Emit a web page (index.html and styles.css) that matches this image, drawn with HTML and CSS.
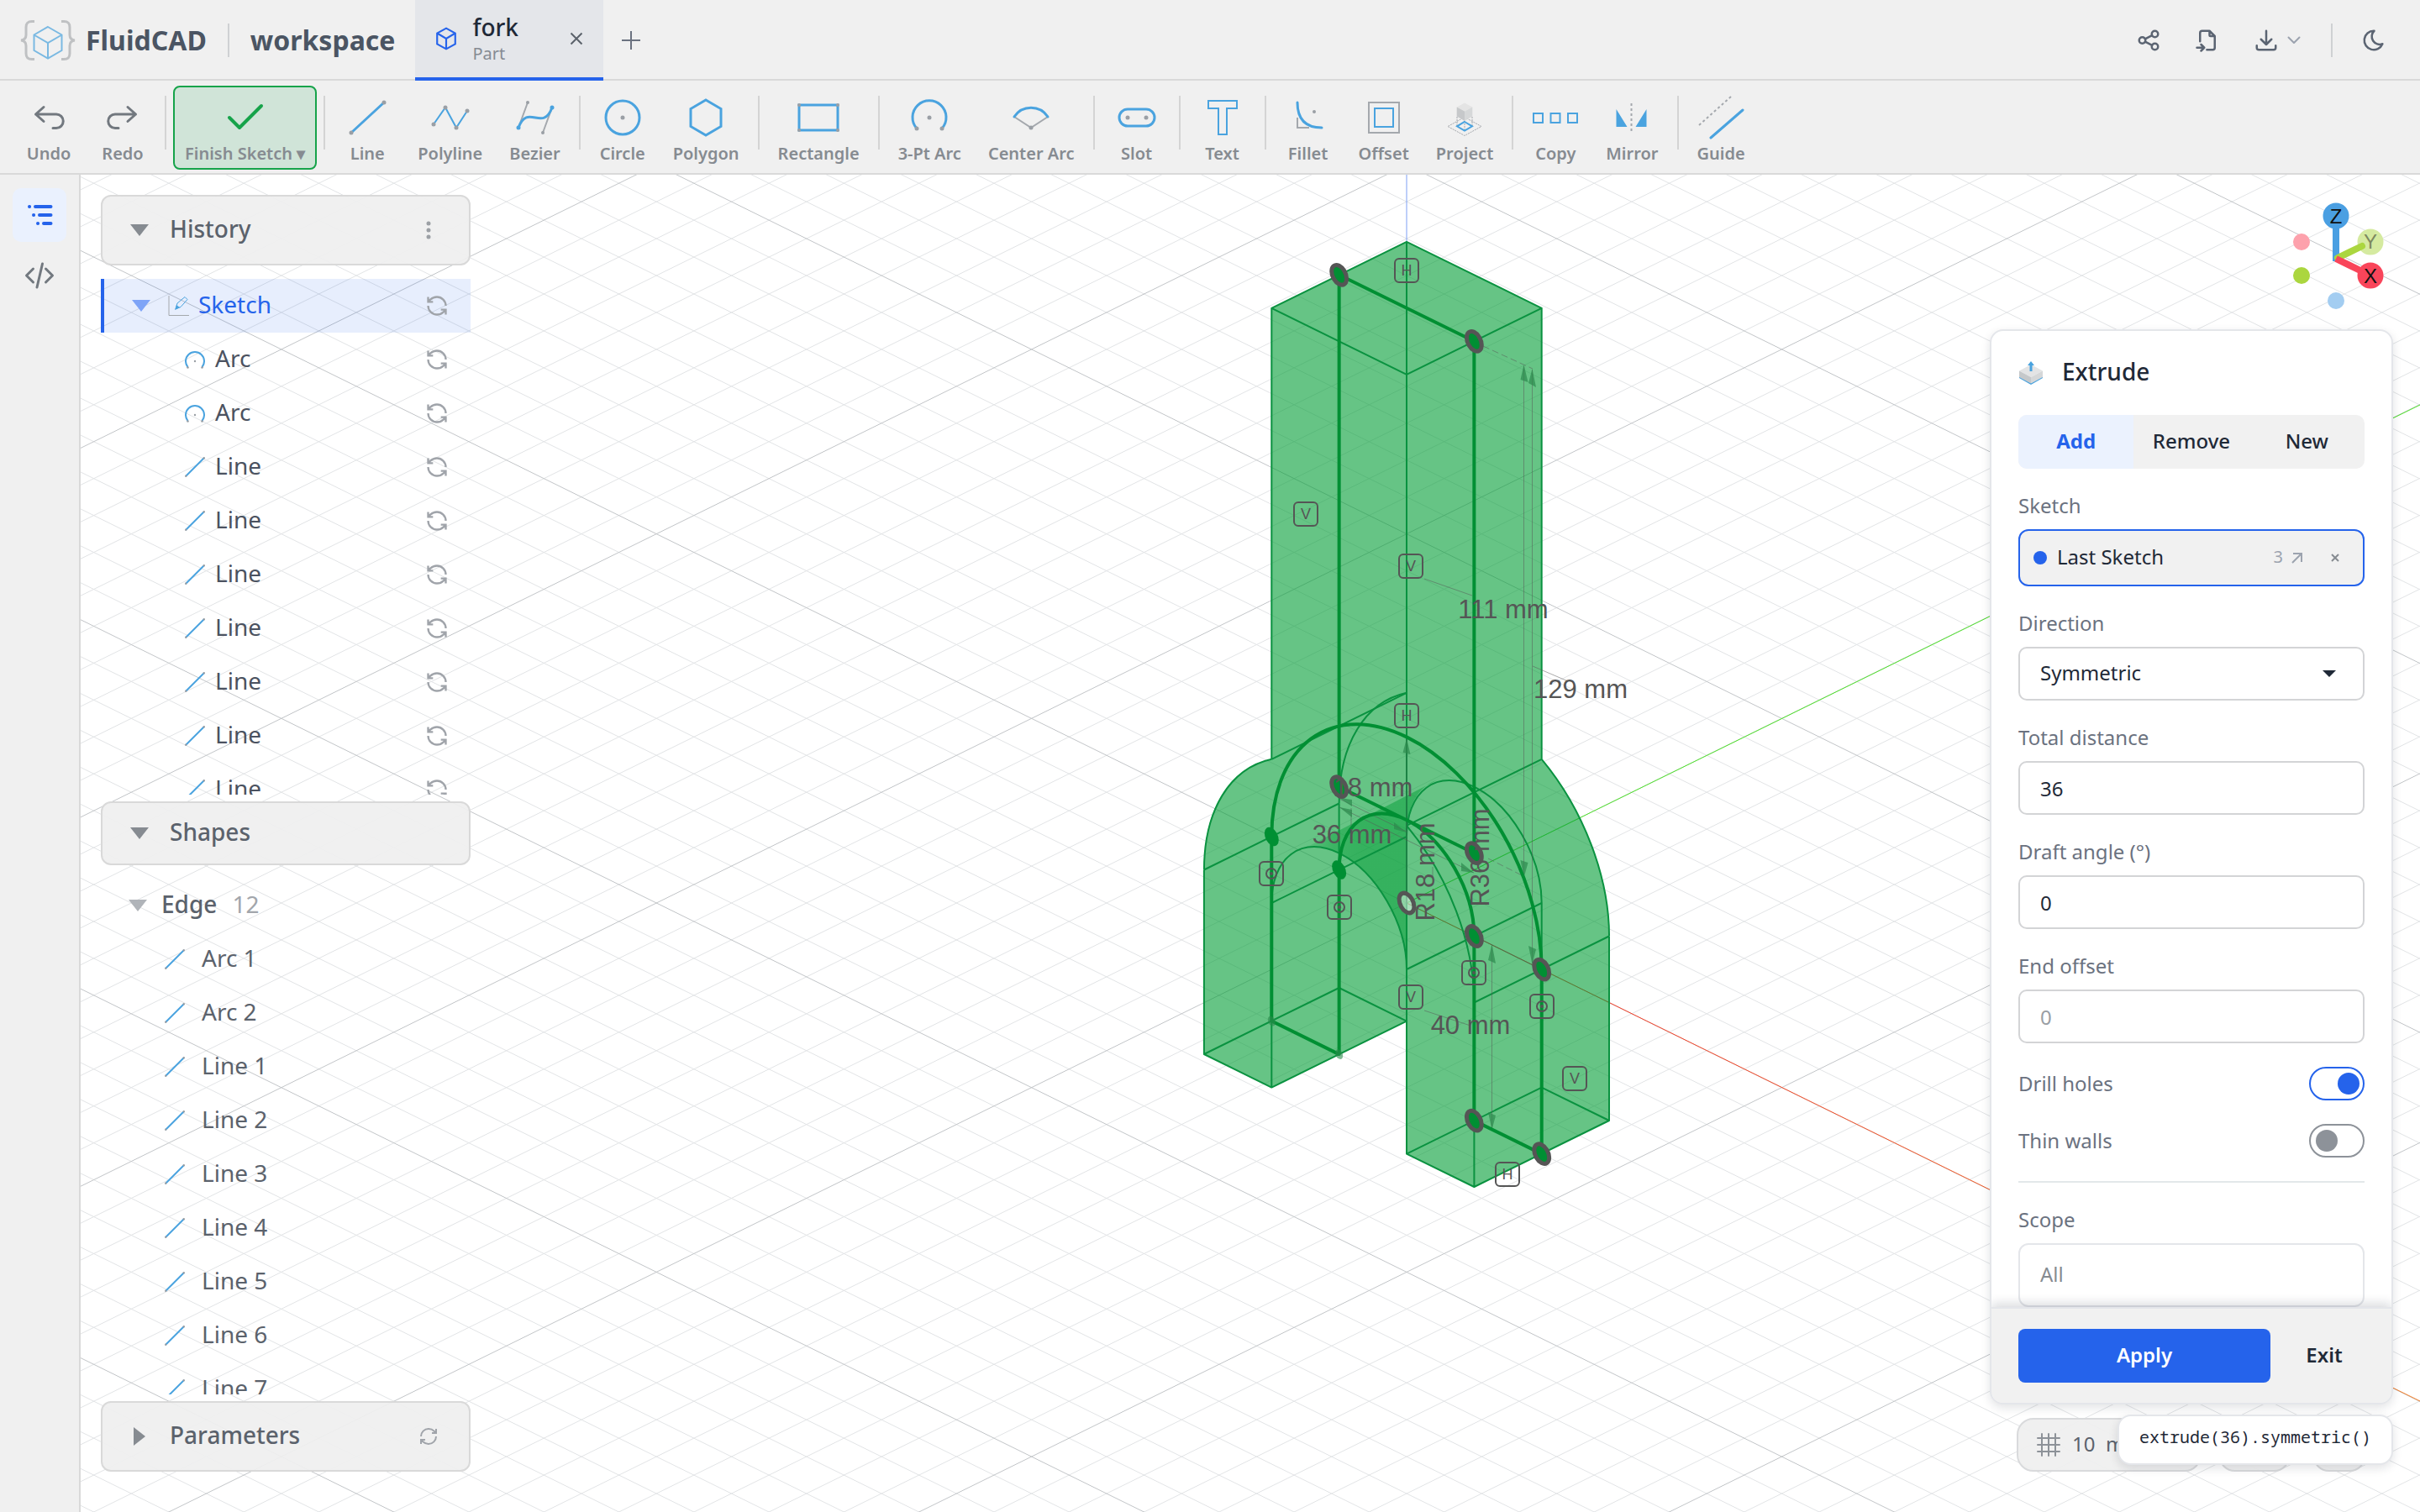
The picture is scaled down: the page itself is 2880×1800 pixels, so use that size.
FILE: index.html
```html
<!DOCTYPE html>
<html lang="en">
<head>
<meta charset="utf-8">
<title>FluidCAD - fork</title>
<link rel="stylesheet" href="styles.css">
</head>
<body>
<svg class="defs" aria-hidden="true">
  <symbol id="i-refresh" viewBox="0 0 24 24"><path d="M21 12a9 9 0 0 0-9-9 9.75 9.75 0 0 0-6.74 2.74L3 8M3 3v5h5M3 12a9 9 0 0 0 9 9 9.75 9.75 0 0 0 6.74-2.74L21 16M16 16h5v5"/></symbol>
  <symbol id="i-sync" viewBox="0 0 24 24"><path d="M3 12a9 9 0 0 1 9-9 9.75 9.75 0 0 1 6.74 2.74L21 8M21 3v5h-5M21 12a9 9 0 0 1-9 9 9.75 9.75 0 0 1-6.74-2.74L3 16M8 16H3v5"/></symbol>
  <symbol id="i-line" viewBox="0 0 24 24"><path class="b" d="M1 23 23 1"/><circle class="d" cx="1.2" cy="22.8" r="1.2"/><circle class="d" cx="22.8" cy="1.2" r="1.2"/></symbol>
  <symbol id="i-arc" viewBox="0 0 24 24"><path class="b" d="M3.500 21A11 11 0 1 1 20.500 21"/><circle class="d" cx="3.500" cy="21.500" r="1.300"/><circle class="d" cx="20.500" cy="21.500" r="1.300"/><circle class="d" cx="12" cy="14" r="1.200"/></symbol>
  <symbol id="i-cube" viewBox="0 0 24 26"><path d="M12 1.500 22 7v12l-10 5.500L2 19V7zM2 7l10 6 10-6M12 13v11.500"/></symbol>
  <symbol id="i-tri" viewBox="0 0 22 14"><path d="M0 0h22L11 14z"/></symbol>
</svg>

<header class="topbar">
  <svg class="logo" viewBox="0 0 66 48"><path class="brace" d="M17 1.500h-3c-5 0-7 2-7 7v9c0 4-1.500 6-6 6.500 4.500.5 6 2.500 6 6.500v9c0 5 2 7 7 7h3M49 1.500h3c5 0 7 2 7 7v9c0 4 1.500 6 6 6.500-4.500.5-6 2.500-6 6.500v9c0 5-2 7-7 7h-3"/><path class="box" d="M33 8 49.500 17.500V36L33 45.500 16.500 36V17.500zM16.500 17.500 33 27l16.500-9.500M33 27v18.500"/></svg>
  <span class="brand">FluidCAD</span>
  <span class="bar"></span>
  <span class="workspace">workspace</span>
  <div class="tab">
    <svg class="tab-icon" viewBox="0 0 24 26"><use href="#i-cube"/></svg>
    <div class="tab-text"><span class="tab-name">fork</span><span class="tab-kind">Part</span></div>
    <button class="plain tab-close" aria-label="Close tab"><svg width="16" height="16" viewBox="0 0 16 16"><path d="M1.500 1.500l13 13M14.500 1.500l-13 13"/></svg></button>
  </div>
  <button class="plain add-tab" aria-label="New tab"><svg width="22" height="22" viewBox="0 0 22 22"><path d="M11 0v22M0 11h22"/></svg></button>
  <nav class="actions">
    <button class="plain" aria-label="Share"><svg width="30" height="30" viewBox="0 0 24 24"><circle cx="6" cy="12" r="3"/><circle cx="18" cy="6" r="3"/><circle cx="18" cy="18" r="3"/><path d="M8.700 10.700l6.600-3.400M8.700 13.300l6.600 3.400"/></svg></button>
    <button class="plain" aria-label="Import"><svg width="30" height="30" viewBox="0 0 24 24"><path d="M14 3v4a1 1 0 0 0 1 1h4M5 13V5a2 2 0 0 1 2-2h7l5 5v11a2 2 0 0 1-2 2h-5.500M2 19h7M6 16l3 3-3 3"/></svg></button>
    <button class="plain" aria-label="Export"><svg width="30" height="30" viewBox="0 0 24 24"><path d="M3 17v2a2 2 0 0 0 2 2h14a2 2 0 0 0 2-2v-2M7 11l5 5 5-5M12 3v13"/></svg><svg class="chev" width="16" height="10" viewBox="0 0 16 10"><path d="M1.500 1.500 8 8l6.500-6.500"/></svg></button>
    <span class="bar"></span>
    <button class="plain" aria-label="Dark mode"><svg width="30" height="30" viewBox="0 0 24 24"><path d="M12 3h.4a7.500 7.500 0 0 0 7.900 12.400A9 9 0 1 1 12 3z"/></svg></button>
  </nav>
</header>

<div class="toolbar" role="toolbar">
  <button class="tool"><svg class="nav" viewBox="0 0 56 56"><path d="M22 15.500 12.500 24l9.500 8.500M12.500 24H37a8.200 8.200 0 0 1 0 16.500h-4"/></svg>Undo</button>
  <button class="tool"><svg class="nav" viewBox="0 0 56 56"><path d="M34 15.500l9.500 8.500-9.500 8.500M43.500 24H19a8.200 8.200 0 0 0 0 16.500h4"/></svg>Redo</button>
  <span class="rule"></span>
  <button class="tool finish"><svg viewBox="0 0 56 56"><path d="M9 28l12 12L47 14"/></svg><span>Finish Sketch ▾</span></button>
  <span class="rule"></span>
  <button class="tool"><svg viewBox="0 0 56 56"><path class="t" d="M9 46 48 10"/><circle class="d" cx="9" cy="46" r="2.500"/><circle class="d" cx="48" cy="10" r="2.500"/></svg>Line</button>
  <button class="tool"><svg viewBox="0 0 56 56"><path class="b" d="M8 36 22 16l13 24 13-20"/><g class="d"><circle cx="8" cy="36" r="2.500"/><circle cx="22" cy="16" r="2.500"/><circle cx="35" cy="40" r="2.500"/><circle cx="48" cy="20" r="2.500"/></g></svg>Polyline</button>
  <button class="tool"><svg viewBox="0 0 56 56"><path class="g" d="M8 40 19 10M48 16 37 46"/><path class="t" d="M8 40C19 10 37 46 48 16"/><circle class="d" cx="19" cy="10" r="2"/><circle class="d" cx="37" cy="46" r="2"/><circle class="f" cx="8" cy="40" r="2.500"/><circle class="f" cx="48" cy="16" r="2.500"/></svg>Bezier</button>
  <span class="rule"></span>
  <button class="tool"><svg viewBox="0 0 56 56"><circle class="t" cx="28" cy="28" r="20"/><circle class="d" cx="28" cy="28" r="2.500"/></svg>Circle</button>
  <button class="tool"><svg viewBox="0 0 56 56"><path class="t" d="M28 7 46 17.500v21L28 49 10 38.500v-21z"/></svg>Polygon</button>
  <span class="rule"></span>
  <button class="tool"><svg viewBox="0 0 56 56"><rect class="t" x="5" y="13" width="46" height="30"/><g class="d"><circle cx="5" cy="13" r="2"/><circle cx="51" cy="13" r="2"/><circle cx="5" cy="43" r="2"/><circle cx="51" cy="43" r="2"/></g></svg>Rectangle</button>
  <span class="rule"></span>
  <button class="tool"><svg viewBox="0 0 56 56"><path class="t" d="M13 41A20 20 0 1 1 43 41"/><circle class="d" cx="28" cy="28" r="2.500"/><circle class="d" cx="13" cy="41" r="2.500"/><circle class="d" cx="43" cy="41" r="2.500"/></svg>3-Pt Arc</button>
  <button class="tool"><svg viewBox="0 0 56 56"><path class="g" d="M8 27 28 40 48 27"/><path class="t" d="M8 27A24 24 0 0 1 48 27"/><circle class="d" cx="28" cy="40" r="2.500"/></svg>Center Arc</button>
  <span class="rule"></span>
  <button class="tool"><svg viewBox="0 0 56 56"><rect class="t" x="7" y="18" width="42" height="20" rx="10"/><circle class="d" cx="17" cy="28" r="2.500"/><circle class="d" cx="39" cy="28" r="2.500"/></svg>Slot</button>
  <span class="rule"></span>
  <button class="tool"><svg viewBox="0 0 56 56"><path class="b" d="M11 8h34v9H33v31H23V17H11z"/></svg>Text</button>
  <span class="rule"></span>
  <button class="tool"><svg viewBox="0 0 56 56"><path class="g" d="M15 28v12h14"/><path class="t" d="M15 10c0 20 10 30 29 30"/><circle class="d" cx="35" cy="21" r="2"/></svg>Fillet</button>
  <button class="tool"><svg viewBox="0 0 56 56"><rect class="g" x="10" y="10" width="36" height="36"/><rect class="b" x="17" y="17" width="22" height="22"/></svg>Offset</button>
  <button class="tool"><svg viewBox="0 0 56 56"><path class="g dash" d="M28 27.500 48 38.500 28 49.500 8 38.500zM19 27v11M37 27v11M28 32v11"/><path class="b" d="M28 33l9 5.300-9 5.300-9-5.300z"/><path fill="#e4e4e4" d="M28 10.500l9.300 5-9.300 5-9.300-5z"/><path fill="#c6c8ca" d="M18.700 15.500l9.300 5V32l-9.300-5.500z"/><path fill="#d6d8d9" d="M37.300 15.500l-9.300 5V32l9.300-5.500z"/></svg>Project</button>
  <span class="rule"></span>
  <button class="tool"><svg viewBox="0 0 56 56"><path class="b" d="M2 23h11v11H2zM22.500 23h11v11h-11zM43 23h11v11H43z"/></svg>Copy</button>
  <button class="tool"><svg viewBox="0 0 56 56"><path class="f" d="M9.500 18l13 21h-13zM45.500 18l-13 21h13z"/><path class="g dot" d="M27.500 11v35"/></svg>Mirror</button>
  <span class="rule"></span>
  <button class="tool"><svg viewBox="0 0 56 56"><path class="g dot" d="M2 37 40 3"/><path class="t" d="M16 52 54 19"/></svg>Guide</button>
</div>

<div class="body">
  <aside class="rail">
    <button class="plain rail-btn on" aria-label="Outline"><svg width="32" height="32" viewBox="0 0 32 32"><path d="M4 6h.1M11 6h18.500M9 16h.1M16 16h13.500M14 26h.1M21 26h8.500"/></svg></button>
    <button class="plain rail-btn" aria-label="Code"><svg width="36" height="32" viewBox="0 0 36 32"><path d="M10.500 8 2.500 16l8 8M25.500 8l8 8-8 8M21.500 2 15 30"/></svg></button>
  </aside>

  <main class="viewport">
    <svg class="scene" viewBox="96 208 2784 1592" preserveAspectRatio="xMidYMid slice">
      <defs>
        <linearGradient id="xaxis" gradientUnits="userSpaceOnUse" x1="1900" y1="0" x2="2880" y2="0"><stop offset="0" stop-color="#f5402c"/><stop offset="1" stop-color="#f5822c"/></linearGradient>
        <linearGradient id="under" gradientUnits="userSpaceOnUse" x1="-9" y1="0" x2="6" y2="0"><stop offset="0" stop-color="#009d34" stop-opacity=".1"/><stop offset=".5" stop-color="#009d34" stop-opacity=".42"/><stop offset="1" stop-color="#009d34" stop-opacity=".48"/></linearGradient>
        <g id="pt"><circle r="2" class="pt-in"/><circle r="2" class="pt-ring" vector-effect="non-scaling-stroke"/></g>
        <g id="badge"><rect x="-14" y="-14" width="28" height="28" rx="5"/></g>
        <g id="coin"><rect x="-14" y="-14" width="28" height="28" rx="5"/><circle r="6"/><circle r="1"/></g>
      </defs>
      <path id="grid-minor" class="minor"/>
      <path id="grid-major" class="major"/>
      <path class="axis" stroke="url(#xaxis)" d="M1674 1075 2900 1677.800"/>
      <path class="axis" stroke="#52e62e" d="M1674 1075 2900 472.200"/>
      <path class="axis" stroke="#7d9ff5" stroke-width="2" d="M1674 200V290"/>

      <path class="body-fill" d="M1674 287.800 1834.700 366.800V903.800C1880 955 1915 1040 1915 1114.500V1334L1754.400 1413 1674 1373.600V1215.600L1513.300 1294.600 1432.900 1255V1035.500C1432.900 965 1460 915 1513.300 903.800V366.800z"/>
      <g transform="matrix(4.464 2.195 0 -5.49 1593.650 1114.500)">
        <path fill="url(#under)" d="M18 0A18 18 0 0 1 -9 15.590L26 44.200A18 18 0 0 1 18 28.780z"/>
      </g>

      <g class="edge">
        <path d="M1674 287.800 1834.700 366.800 1674 445.800 1513.300 366.800zM1513.300 366.800V903.800M1834.700 366.800V903.800M1674 287.800V1373.600M1674 982.800 1834.700 903.800M1513.300 903.800 1674 824.800M1754.400 1193.500 1915 1114.500M1674 1154 1834.700 1075M1513.300 1075 1674 996M1432.900 1035.500 1593.600 956.500"/>
        <path d="M1432.900 1035.500V1255L1513.300 1294.600 1674 1215.600 1593.600 1176 1432.900 1255M1513.300 1075V1294.600M1593.600 956.500V1176M1754.400 1193.500V1413L1915 1334 1834.700 1294.600 1674 1373.600 1754.400 1413M1915 1114.500V1334M1834.700 1075V1294.600"/>
        <path transform="matrix(4.464 2.195 0 -5.49 1593.650 1114.500)" d="M-36 0A36 36 0 0 0 -18 31.180M36 0A36 36 0 0 1 18 31.180M-18 0A18 18 0 0 0 18 0"/>
        <path transform="matrix(4.464 2.195 0 -5.49 1754.350 1035.500)" d="M-36 0A36 36 0 0 0 -18 31.180M36 0A36 36 0 0 1 18 31.180M-18 0A18 18 0 0 0 18 0"/>
      </g>

      <g class="dims">
        <path stroke-dasharray="8 4" d="M1765 412 1824 439M1771 1022 1813 1043"/>
        <path d="M1813.500 436V1043M1823.500 440V1147M1775.500 1125V1343M1695 689 1752 709M1824 793 1866 811M1695 1203 1750 1221M1594 951 1674 990M1594 961 1754 1039M1674 880V1075M1608 962V984M1754 1114 1834 1154M1705 1050V1032"/>
        <path class="head" d="M1813.500 434l-4 18 9 3zM1823.500 439l-4.500 17 9 5zM1813.500 1045l-4-21 9 3zM1823.500 1148l-4.500-22 9 4zM1775.500 1124l-4.500 19 9 4zM1775.500 1345l-4.500-21 9 4zM1674 879l-4.500 17 9 2zM1594 950l15 2v8zM1594 961l15 3v9zM1674 991l-15-12v8zM1754 1039l-15-12v10z"/>
      </g>

      <g transform="matrix(4.464 2.195 0 -5.49 1674 1075)">
        <path class="sketch" d="M-36 -40V0A36 36 0 0 0 36 0V-40H18V0A18 18 0 0 1 -18 0V-40zM-18 18V129H18V18z"/>
        <use href="#pt" x="-18" y="129"/><use href="#pt" x="18" y="129"/><use href="#pt" x="-18" y="18"/><use href="#pt" x="18" y="18"/><use href="#pt" x="18"/><use href="#pt" x="36"/><use href="#pt" x="18" y="-40"/><use href="#pt" x="36" y="-40"/>
        <circle class="solid" cx="-36" r="1.900"/><circle class="solid" cx="-18" r="1.900"/>
        <circle class="faint" cx="-36" cy="-40" r="1"/><circle class="faint" cx="-18" cy="-40" r="1"/>
        <circle r="2" class="origin" vector-effect="non-scaling-stroke"/>
      </g>

      <g class="badge">
        <use href="#badge" x="1674" y="322"/><use href="#badge" x="1554" y="612"/><use href="#badge" x="1679" y="674"/><use href="#badge" x="1674" y="852"/><use href="#badge" x="1679" y="1187"/><use href="#badge" x="1874" y="1284"/><use href="#badge" x="1794" y="1398"/>
        <use href="#coin" x="1513" y="1040"/><use href="#coin" x="1594" y="1080"/><use href="#coin" x="1754" y="1158"/><use href="#coin" x="1835" y="1198"/>
      </g>
      <g class="glyph"><text x="1674" y="328">H</text><text x="1554" y="618">V</text><text x="1679" y="680">V</text><text x="1674" y="858">H</text><text x="1679" y="1193">V</text><text x="1874" y="1290">V</text><text x="1794" y="1404">H</text></g>
      <g class="measure"><text x="1789" y="736">111 mm</text><text x="1881" y="831">129 mm</text><text x="1634" y="948">18 mm</text><text x="1609" y="1004">36 mm</text><text x="1750" y="1231">40 mm</text><text transform="translate(1707 1038) rotate(-90)">R18 mm</text><text transform="translate(1772 1021) rotate(-90)">R36 mm</text></g>

      <g class="gizmo">
        <circle cx="2739" cy="288" r="10" fill="#fda1ac"/><circle cx="2739" cy="328" r="10" fill="#abd63f"/><circle cx="2780" cy="358" r="10" fill="#a3cdf1"/>
        <circle cx="2821" cy="288" r="15.500" fill="#d5eaa0"/>
        <path stroke="#4a9fe2" d="M2780 260V311"/><path stroke="#abd63f" stroke-linecap="round" d="M2782 307 2811 293"/><path stroke="#f9455a" d="M2780 308 2815 325"/>
        <circle cx="2780" cy="257" r="15.500" fill="#4a9fe2"/><circle cx="2821" cy="328" r="15.500" fill="#f9455a"/>
        <text x="2780" y="266">Z</text><text x="2821" y="296" opacity=".45">Y</text><text x="2821" y="337">X</text>
      </g>
    </svg>

    <div class="tree">
      <div class="head-row tall"><button class="plain caret" aria-label="Collapse history"><svg class="tri"><use href="#i-tri"/></svg></button><h2>History</h2><button class="plain end dots" aria-label="History menu"><svg width="6" height="24" viewBox="0 0 6 24"><circle cx="3" cy="4" r="2.500"/><circle cx="3" cy="12" r="2.500"/><circle cx="3" cy="20" r="2.500"/></svg></button></div>
      <ul class="list">
        <li class="row sel"><svg class="tri"><use href="#i-tri"/></svg><svg class="sk" width="25" height="25" viewBox="0 0 25 25"><path class="g" d="M1 0v23.500h24"/><path class="b" d="M9 16l2-7 9-7.500 3 3-8 9z"/><path class="f" d="M8 17l2-6 4 3z"/></svg>Sketch<button class="plain end" aria-label="Rebuild"><svg class="re"><use href="#i-refresh"/></svg></button></li>
        <li class="row kid"><svg class="ic"><use href="#i-arc"/></svg>Arc<button class="plain end" aria-label="Rebuild"><svg class="re"><use href="#i-refresh"/></svg></button></li>
        <li class="row kid"><svg class="ic"><use href="#i-arc"/></svg>Arc<button class="plain end" aria-label="Rebuild"><svg class="re"><use href="#i-refresh"/></svg></button></li>
        <li class="row kid"><svg class="ic"><use href="#i-line"/></svg>Line<button class="plain end" aria-label="Rebuild"><svg class="re"><use href="#i-refresh"/></svg></button></li>
        <li class="row kid"><svg class="ic"><use href="#i-line"/></svg>Line<button class="plain end" aria-label="Rebuild"><svg class="re"><use href="#i-refresh"/></svg></button></li>
        <li class="row kid"><svg class="ic"><use href="#i-line"/></svg>Line<button class="plain end" aria-label="Rebuild"><svg class="re"><use href="#i-refresh"/></svg></button></li>
        <li class="row kid"><svg class="ic"><use href="#i-line"/></svg>Line<button class="plain end" aria-label="Rebuild"><svg class="re"><use href="#i-refresh"/></svg></button></li>
        <li class="row kid"><svg class="ic"><use href="#i-line"/></svg>Line<button class="plain end" aria-label="Rebuild"><svg class="re"><use href="#i-refresh"/></svg></button></li>
        <li class="row kid"><svg class="ic"><use href="#i-line"/></svg>Line<button class="plain end" aria-label="Rebuild"><svg class="re"><use href="#i-refresh"/></svg></button></li>
        <li class="row kid"><svg class="ic"><use href="#i-line"/></svg>Line<button class="plain end" aria-label="Rebuild"><svg class="re"><use href="#i-refresh"/></svg></button></li>
      </ul>
      <div class="head-row"><button class="plain caret" aria-label="Collapse shapes"><svg class="tri"><use href="#i-tri"/></svg></button><h2>Shapes</h2></div>
      <ul class="list shapes">
        <li class="row group"><svg class="tri"><use href="#i-tri"/></svg>Edge<span class="count">12</span></li>
        <li class="row leaf"><svg class="ic"><use href="#i-line"/></svg>Arc 1</li>
        <li class="row leaf"><svg class="ic"><use href="#i-line"/></svg>Arc 2</li>
        <li class="row leaf"><svg class="ic"><use href="#i-line"/></svg>Line 1</li>
        <li class="row leaf"><svg class="ic"><use href="#i-line"/></svg>Line 2</li>
        <li class="row leaf"><svg class="ic"><use href="#i-line"/></svg>Line 3</li>
        <li class="row leaf"><svg class="ic"><use href="#i-line"/></svg>Line 4</li>
        <li class="row leaf"><svg class="ic"><use href="#i-line"/></svg>Line 5</li>
        <li class="row leaf"><svg class="ic"><use href="#i-line"/></svg>Line 6</li>
        <li class="row leaf"><svg class="ic"><use href="#i-line"/></svg>Line 7</li>
      </ul>
      <div class="head-row tall"><button class="plain caret" aria-label="Expand parameters"><svg class="tri-r" viewBox="0 0 14 22"><path d="M0 0v22l14-11z"/></svg></button><h2>Parameters</h2><button class="plain end" aria-label="Reset parameters"><svg class="re small"><use href="#i-sync"/></svg></button></div>
    </div>

    <div class="units">
      <button class="pill wide"><svg width="28" height="28" viewBox="0 0 28 28"><path d="M6 1v26M14 1v26M22 1v26M1 6h26M1 14h26M1 22h26"/></svg><span>10&nbsp; mm</span></button>
      <button class="pill mid" aria-label="Fit view"></button>
      <button class="pill slim" aria-label="View options"></button>
    </div>

    <div class="dock">
      <form class="panel">
        <div class="scroll">
          <div class="title"><svg width="30" height="28" viewBox="0 0 30 28"><path fill="#4aa3df" d="M1 18l14 8 14-8v2l-14 8-14-8z"/><path fill="#e3e4e5" d="M15 4l14 7.500-14 7.500-14-7.500z"/><path fill="#c5c8ca" d="M1 11.500 15 19v7.500L1 19z"/><path fill="#d5d7d8" d="M29 11.500 15 19v7.500L29 19z"/><path fill="#4aa3df" d="M15 0l4 5h-2.500v7h-3V5H11z"/></svg><h1>Extrude</h1></div>
          <div class="seg" role="group" aria-label="Operation"><button type="button" class="on">Add</button><button type="button">Remove</button><button type="button">New</button></div>
          <div class="field"><span class="lab">Sketch</span>
            <div class="pick"><i></i><span>Last Sketch</span><em>3</em><svg width="13" height="13" viewBox="0 0 13 13"><path d="M1 12 12 1M2 1h10v10"/></svg><button type="button" class="plain" aria-label="Clear sketch"><svg width="10" height="10" viewBox="0 0 10 10"><path d="M1 1l8 8M9 1 1 9"/></svg></button></div></div>
          <div class="field"><label for="dir">Direction</label><div class="select"><select id="dir"><option>Symmetric</option></select></div></div>
          <div class="field"><label for="dist">Total distance</label><input id="dist" type="text" value="36"></div>
          <div class="field"><label for="draft">Draft angle (°)</label><input id="draft" type="text" value="0"></div>
          <div class="field"><label for="off">End offset</label><input id="off" type="text" placeholder="0"></div>
          <div class="switch"><label for="drill">Drill holes</label><input id="drill" type="checkbox" checked></div>
          <div class="switch"><label for="thin">Thin walls</label><input id="thin" type="checkbox"></div>
          <hr>
          <div class="field scope"><label for="scope">Scope</label><input id="scope" type="text" placeholder="All"></div>
        </div>
        <footer><button type="button" class="apply">Apply</button><button type="button" class="exit">Exit</button></footer>
      </form>
      <code class="snippet">extrude(36).symmetric()</code>
    </div>
  </main>
</div>
<script src="grid.js"></script>
</body>
</html>
```
FILE: styles.css
```css
* { box-sizing: border-box; }
html, body { height: 100%; }
body {
  margin: 0;
  display: flex;
  flex-direction: column;
  overflow: hidden;
  background: #fff;
  color: #1f2937;
  font-family: "Noto Sans", "Liberation Sans", sans-serif;
  font-size: 24px;
}
h1, h2, ul { margin: 0; padding: 0; }
svg { flex: none; fill: none; }
button, input, select { font: inherit; color: inherit; }
.defs { position: absolute; width: 0; height: 0; }
.plain { border: 0; padding: 0; background: none; display: flex; align-items: center; cursor: pointer; }
.end { margin-left: auto; }

.b, .t { stroke: #4aa3df; stroke-width: 2; fill: none; }
.t { stroke-width: 3; stroke-linecap: round; }
.g { stroke: #a4a8ad; stroke-width: 2; fill: none; }
.d { fill: #9a9fa5; }
.f { fill: #4aa3df; }
.dash { stroke-width: 1; stroke-dasharray: 2 1; }
.dot { stroke-width: 2; stroke-dasharray: 3 3; }

/* top bar */
.topbar {
  flex: none;
  display: flex;
  align-items: center;
  height: 96px;
  padding: 2px 40px 0 24px;
  background: #f0f0f0;
  border-bottom: 2px solid #d9d9d9;
}
.logo { width: 66px; height: 48px; }
.logo .brace { stroke: #bfc1c3; stroke-width: 3; }
.logo .box { stroke: #7ab9e2; stroke-width: 2; }
.brand, .workspace { color: #4b5563; font-size: 32px; font-weight: 700; line-height: 48px; }
.brand { margin-left: 12px; }
.bar { width: 2px; height: 40px; margin: 0 25px; background: #cfd1d3; }
.tab {
  display: flex;
  align-items: center;
  align-self: stretch;
  width: 224px;
  margin: -2px 22px -2px 24px;
  padding: 0 24px;
  background: #e4e6ea;
  border-bottom: 4px solid #2563eb;
}
.tab-icon { width: 26px; height: 28px; stroke: #2563eb; stroke-width: 2; }
.tab-text { display: flex; flex-direction: column; margin-left: 18px; }
.tab-name { font-size: 28px; font-weight: 500; line-height: 36px; }
.tab-kind { font-size: 20px; line-height: 28px; color: #868b93; }
.tab-close { margin-left: auto; stroke: #5b626b; stroke-width: 2; }
.add-tab { stroke: #6b7280; stroke-width: 2; }
.actions { display: flex; align-items: center; margin-left: auto; stroke: #5b6472; stroke-width: 2; stroke-linecap: round; stroke-linejoin: round; }
.actions .plain { margin-left: 40px; stroke: inherit; }
.actions .bar { margin: 0 0 0 36px; }
.actions .bar + .plain { margin-left: 34px; }
.actions .chev { margin-left: 10px; stroke: #9ca3af; }

/* toolbar */
.toolbar {
  flex: none;
  display: flex;
  align-items: flex-start;
  gap: 4px;
  height: 112px;
  padding: 6px 16px;
  background: #f0f0f0;
  border-bottom: 2px solid #d9d9d9;
}
.tool {
  display: flex;
  flex-direction: column;
  align-items: center;
  gap: 3px;
  height: 100px;
  min-width: 84px;
  padding: 8px 12px 0;
  border: 2px solid transparent;
  border-radius: 8px;
  background: none;
  color: #868b91;
  font-size: 20px;
  font-weight: 600;
  line-height: 24px;
  white-space: nowrap;
}
.tool svg { width: 56px; height: 56px; }
.tool .nav { stroke: #72787f; stroke-width: 3; stroke-linecap: round; stroke-linejoin: round; }
.tool.finish { border-color: #16a34a; background: #d0e4d8; }
.tool.finish svg { stroke: #16a34a; stroke-width: 4; stroke-linecap: round; stroke-linejoin: round; }
.rule { flex: none; width: 2px; height: 64px; margin: 12px 4px 0; background: #d4d4d4; }

/* side rail */
.body { flex: 1; display: flex; min-height: 0; }
.rail {
  flex: none;
  display: flex;
  flex-direction: column;
  align-items: center;
  gap: 8px;
  width: 96px;
  padding-top: 16px;
  background: #f0f0f0;
  border-right: 2px solid #d9d9d9;
}
.rail-btn { justify-content: center; width: 64px; height: 64px; border-radius: 10px; stroke: #72787f; stroke-width: 3; stroke-linecap: round; stroke-linejoin: round; }
.rail-btn.on { background: #eaf1fe; stroke: #2563eb; stroke-width: 4; }

/* drawing area */
.viewport { position: relative; flex: 1; min-width: 0; overflow: hidden; }
.scene { position: absolute; width: 100%; height: 100%; }
.minor { stroke: #e2e4e6; stroke-width: 1; }
.major { stroke: #c2c5c8; stroke-width: 1; }
.axis { stroke-width: 1; }
.body-fill { fill: #009d34; fill-opacity: .6; }
.edge { stroke: #0a9240; stroke-width: 2; stroke-linejoin: round; }
.edge path, .sketch { vector-effect: non-scaling-stroke; }
.sketch { stroke: #008f33; stroke-width: 4; stroke-linejoin: round; }
.pt-in, .solid { fill: #008f33; }
.pt-ring { stroke: #555; stroke-width: 5; }
.origin { fill: #fff; fill-opacity: .45; stroke: #555; stroke-width: 5; }
.faint { fill: #2c8a4d; fill-opacity: .6; }
.dims { stroke: #555; stroke-opacity: .5; stroke-width: 1; }
.dims .head { fill: #2c8a4d; fill-opacity: .7; stroke: none; }
.badge { stroke: #555; stroke-width: 2; }
.glyph, .measure, .gizmo { text-anchor: middle; font-family: "Liberation Sans", sans-serif; fill: #555; }
.glyph { font-size: 18px; }
.measure { font-size: 31px; }
.gizmo { font-size: 24px; stroke-width: 8; }
.gizmo text { fill: #111; stroke: none; }

/* model tree */
.tree {
  position: absolute;
  left: 24px;
  top: 24px;
  bottom: 48px;
  width: 440px;
  display: flex;
  flex-direction: column;
}
.head-row {
  flex: none;
  display: flex;
  align-items: center;
  height: 76px;
  padding: 0 36px 0 33px;
  background: rgba(239, 239, 239, .93);
  border: 2px solid #d9d9d9;
  border-radius: 12px;
}
.head-row.tall { height: 84px; }
.head-row h2 { margin: 0 0 4px 25px; font-size: 28px; font-weight: 500; line-height: 40px; color: #5b626c; }
.caret { width: 22px; justify-content: center; fill: #868b91; }
.tri { width: 22px; height: 14px; fill: inherit; }
.tri-r { width: 14px; height: 22px; fill: inherit; }
.dots { padding-right: 9px; fill: #9ca0a5; }
.dots svg { fill: inherit; }
.list { flex: 1; min-height: 0; overflow: hidden; list-style: none; margin: 16px 0 8px; }
.row { display: flex; align-items: center; height: 64px; padding: 0 26px 4px 0; font-size: 28px; line-height: 40px; color: #4b5260; }
.row > svg, .row > .end { margin-top: 4px; }
.row.sel { padding-left: 33px; border-left: 4px solid #2563eb; background: rgba(37, 99, 235, .11); color: #2563eb; fill: #7ea4f7; }
.row > .sk { margin: 4px 11px 0 21px; }
.sk .g, .sk .b { stroke-width: 1; }
.row.kid { padding-left: 100px; }
.ic { width: 24px; height: 24px; margin-right: 12px; }
.re { width: 28px; height: 28px; stroke: #a0a4aa; stroke-width: 2; }
.re.small { width: 24px; height: 24px; }
.shapes .row { color: #5b626c; }
.row.group { padding-left: 33px; font-weight: 500; fill: #b0b4b9; }
.group .tri { margin-right: 17px; }
.count { margin-left: 18px; font-weight: 400; color: #a2a6ac; }
.row.leaf { padding-left: 76px; }
.leaf .ic { margin-right: 20px; }

/* unit pills */
.units { position: absolute; right: 64px; bottom: 48px; display: flex; }
.pill { display: flex; align-items: center; height: 64px; border: 2px solid #d9dadc; border-radius: 20px; background: rgba(239, 239, 239, .93); color: #5b626c; font-size: 24px; }
.pill span { margin-bottom: 4px; }
.pill.wide { width: 220px; gap: 14px; padding-left: 22px; margin-right: 20px; }
.pill.wide svg { stroke: #8d9298; stroke-width: 2; stroke-linecap: round; }
.pill.mid { width: 86px; margin-right: 26px; }
.pill.slim { width: 64px; }

/* feature dock */
.dock { position: absolute; right: 32px; top: 184px; bottom: 56px; width: 480px; display: flex; flex-direction: column; align-items: flex-end; gap: 12px; }
.panel {
  flex: 1;
  min-height: 0;
  width: 100%;
  display: flex;
  flex-direction: column;
  overflow: hidden;
  border: 2px solid #e4e6ea;
  border-radius: 16px;
  background: #fff;
  box-shadow: 0 4px 12px rgba(15, 23, 42, .12);
}
.scroll { flex: 1; min-height: 0; overflow: hidden; display: flex; flex-direction: column; gap: 28px; padding: 28px 32px 0; }
.scroll > * { flex: none; }
.title { display: flex; align-items: center; gap: 22px; height: 40px; margin-bottom: 4px; }
.title svg { margin-top: 4px; }
.title h1 { font-size: 28px; font-weight: 500; line-height: 40px; }
.seg { display: grid; grid-template-columns: 1fr 1fr 1fr; height: 64px; overflow: hidden; border-radius: 10px; background: #f1f1f1; }
.seg button { border: 0; padding: 0 0 4px; background: none; font-weight: 500; }
.seg .on { background: #ebf2fe; color: #2563eb; font-weight: 700; }
.field { display: flex; flex-direction: column; gap: 12px; }
.field label, .lab, .switch label { line-height: 32px; color: #6b7280; }
.field input, .select select { width: 100%; height: 64px; padding: 0 24px; border: 2px solid #d3d4d6; border-radius: 10px; background: #fff; outline: 0; }
.select { display: flex; align-items: center; position: relative; }
.select select { appearance: none; padding-bottom: 3px; }
.select::after { content: ""; position: absolute; right: 34px; border: 8px solid transparent; border-top-color: #1f2937; border-bottom: 0; }
.field input::placeholder { color: #9a9ea4; opacity: 1; }
.pick { display: flex; align-items: center; height: 68px; padding: 0 28px 0 16px; border: 2px solid #2563eb; border-radius: 12px; background: #f1f1f1; }
.pick i { width: 16px; height: 16px; margin-right: 12px; border-radius: 50%; background: #2563eb; }
.pick span, .pick em { margin-bottom: 3px; }
.pick em { margin-left: auto; margin-right: 10px; font-style: normal; font-size: 20px; color: #9ca3af; }
.pick svg { stroke: #9ca3af; stroke-width: 2; }
.pick .plain { margin-left: 34px; }
.pick .plain svg { stroke: #868b91; }
.switch { display: flex; align-items: center; justify-content: space-between; height: 40px; }
.switch input { appearance: none; display: flex; align-items: center; width: 66px; height: 40px; margin: 0; padding: 0 6px; border: 2px solid #8d9299; border-radius: 20px; }
.switch input::before { content: ""; width: 26px; height: 26px; border-radius: 50%; background: #8d9299; }
.switch input:checked { justify-content: flex-end; padding: 0 4px; border-color: #2563eb; }
.switch input:checked::before { background: #2563eb; }
hr { width: 100%; height: 2px; margin: 0; border: 0; background: #e3e8ea; }
.field.scope input { height: 76px; padding-bottom: 3px; border-color: #e4e6ea; border-radius: 12px; }
.field.scope input::placeholder { color: #868b91; }
.panel footer { position: relative; display: grid; grid-template-columns: 300px 1fr; gap: 16px; padding: 24px 32px; border-top: 2px solid #e4e6ea; background: #f1f1f1; box-shadow: 0 -4px 12px rgba(15, 23, 42, .16); }
.panel footer button { height: 64px; padding: 0 0 4px; border: 0; border-radius: 8px; font-weight: 600; background: none; }
.panel footer .apply { background: #2563eb; color: #fff; }
.snippet { flex: none; height: 60px; padding: 0 24px; border: 2px solid #e4e6ea; border-radius: 16px; background: #fff; font-family: "Noto Sans Mono", "DejaVu Sans Mono", monospace; font-size: 20px; line-height: 50px; box-shadow: 0 4px 12px rgba(15, 23, 42, .12); }
```
FILE: grid.js
```js
// Ground grid: one line every 10 mm, a stronger one every 100 mm.
const project = (x, y) => [1674 + 4.464 * (x + y), 1075 + 2.197 * (x - y)];
const segment = (a, b) => `M${project(...a).join(" ")}L${project(...b).join(" ")}`;
const span = 420;
let minor = "";
let major = "";
for (let n = -span; n <= span; n += 10) {
  const lines = segment([n, -span], [n, span]) + segment([-span, n], [span, n]);
  if (n % 100 === 0) major += lines;
  else minor += lines;
}
document.getElementById("grid-minor").setAttribute("d", minor);
document.getElementById("grid-major").setAttribute("d", major);
```
